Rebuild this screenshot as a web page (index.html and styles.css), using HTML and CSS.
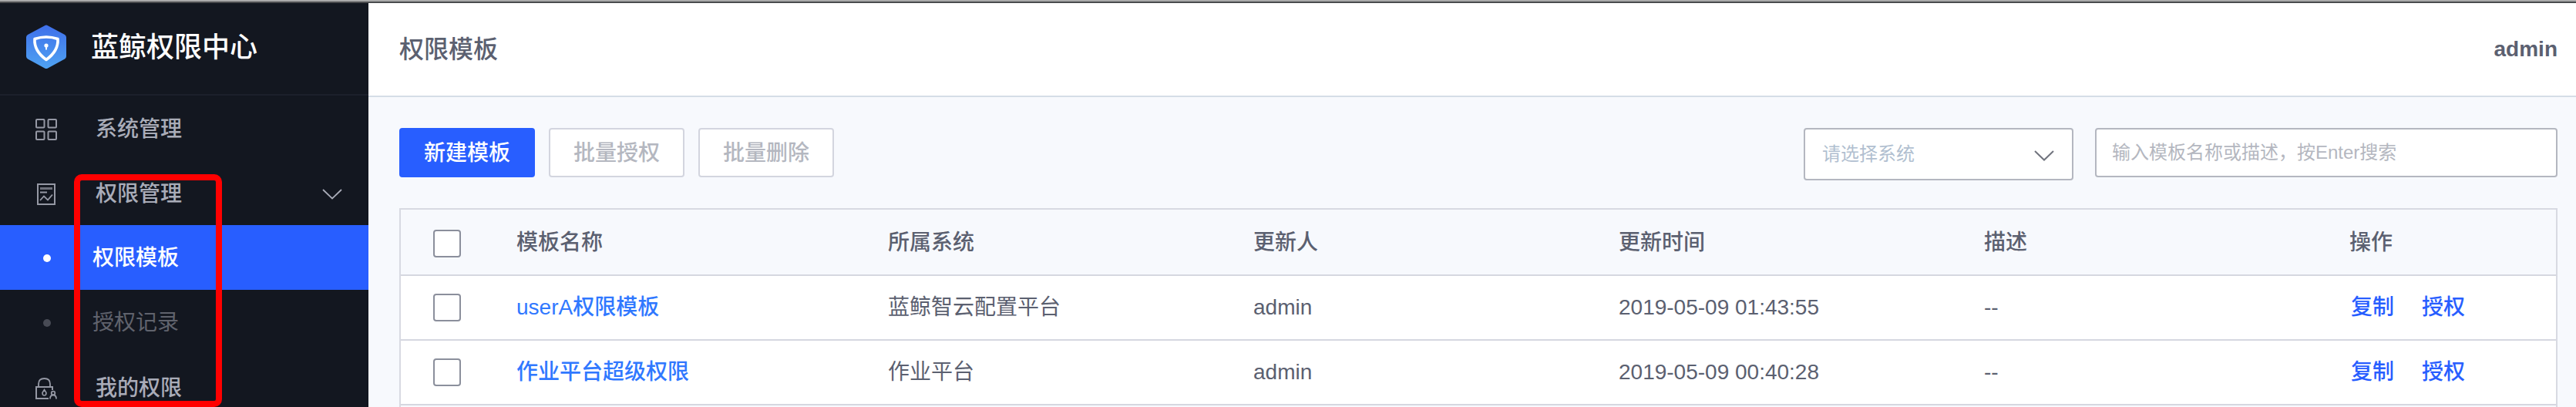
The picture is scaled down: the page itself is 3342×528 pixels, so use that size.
FILE: index.html
```html
<!DOCTYPE html>
<html lang="zh-CN">
<head>
<meta charset="utf-8">
<title>蓝鲸权限中心</title>
<link rel="stylesheet" href="styles.css">
</head>
<body>
<div class="app">
  <aside class="sidebar">
    <div class="brand">
      <svg class="brand-logo" viewBox="0 0 52 58" aria-hidden="true">
        <defs>
          <linearGradient id="logo-fill" x1="0" y1="0" x2="0" y2="1">
            <stop offset="0" stop-color="#3f6fea"/>
            <stop offset="1" stop-color="#4fa3f2"/>
          </linearGradient>
        </defs>
        <path d="M24 1.200q2-1.200 4 0L50 13q2 1.200 2 3.400V41q0 2.200-2 3.400L28 56.500q-2 1.200-4 0L2 44.400Q0 43.200 0 41V16.400Q0 14.200 2 13z" fill="url(#logo-fill)"/>
        <path d="M11 18.500Q26 13.500 41 18.500Q42 34 26 45.500Q10 34 11 18.500z" fill="none" stroke="#fff" stroke-width="3.600" stroke-linejoin="round"/>
        <circle cx="26" cy="27" r="2.600" fill="#fff"/>
        <path d="M26 27v5.500" stroke="#fff" stroke-width="2"/>
      </svg>
      <span class="brand-name">蓝鲸权限中心</span>
    </div>
    <nav class="nav">
      <a class="nav-item" href="#system">
        <svg class="nav-icon" viewBox="0 0 28 28" aria-hidden="true"><g fill="none" stroke="currentColor" stroke-width="2"><rect x="1" y="1" width="10.500" height="10.500" rx="1"/><rect x="16.500" y="1" width="10.500" height="10.500" rx="1"/><rect x="1" y="16.500" width="10.500" height="10.500" rx="1"/><rect x="16.500" y="16.500" width="10.500" height="10.500" rx="1"/></g></svg>
        <span>系统管理</span>
      </a>
      <a class="nav-item" href="#permission">
        <svg class="nav-icon" viewBox="0 0 28 28" aria-hidden="true"><g fill="none" stroke="currentColor" stroke-width="2"><rect x="3" y="1" width="22" height="26"/><path d="M6 6.500h16" stroke-width="3" opacity=".7"/><path d="M6 11.500h9"/><path d="M6 22l5-5.500 5 5 6-7" stroke-width="1.800"/></g></svg>
        <span>权限管理</span>
        <svg class="nav-arrow" viewBox="0 0 26 14" aria-hidden="true"><path d="M1 1l12 11.500L25 1" fill="none" stroke="currentColor" stroke-width="1.800"/></svg>
      </a>
      <a class="nav-item nav-sub is-active" href="#template"><i class="dot"></i><span>权限模板</span></a>
      <a class="nav-item nav-sub" href="#record"><i class="dot"></i><span>授权记录</span></a>
      <a class="nav-item" href="#mine">
        <svg class="nav-icon" viewBox="0 0 28 28" aria-hidden="true"><g fill="none" stroke="currentColor" stroke-width="2"><path d="M17 27H1V12h21v4"/><path d="M4 12V8q0-7 7.500-7T19 8v4" stroke-width="1.800"/><path d="M11.500 15.500l2.500 4q0 3.500-2.500 3.500T9 19.500z" stroke-width="1.600"/><circle cx="23" cy="20" r="2.300" stroke-width="1.800"/><path d="M19 27.500q0-5 4-5t4 5" stroke-width="1.800"/></g></svg>
        <span>我的权限</span>
      </a>
    </nav>
    <div class="highlight"></div>
  </aside>
  <div class="page">
    <header class="topbar">
      <h1 class="page-title">权限模板</h1>
      <span class="user">admin</span>
    </header>
    <main class="content">
      <div class="toolbar">
        <button class="btn btn-primary" type="button">新建模板</button>
        <button class="btn" type="button" disabled>批量授权</button>
        <button class="btn" type="button" disabled>批量删除</button>
        <div class="filters">
          <div class="select-wrap">
            <select class="select" aria-label="请选择系统"><option>请选择系统</option></select>
            <svg class="select-arrow" viewBox="0 0 26 14" aria-hidden="true"><path d="M1 1l12 11.500L25 1" fill="none" stroke="currentColor" stroke-width="2"/></svg>
          </div>
          <input class="search" type="text" aria-label="搜索模板" placeholder="输入模板名称或描述，按Enter搜索">
        </div>
      </div>
      <div class="table-box">
        <table class="table">
          <colgroup><col class="col-check"><col class="col-name"><col><col><col><col><col class="col-ops"></colgroup>
          <thead>
            <tr>
              <th class="check-cell"><input class="check" type="checkbox" aria-label="全选"></th>
              <th>模板名称</th><th>所属系统</th><th>更新人</th><th>更新时间</th><th>描述</th><th>操作</th>
            </tr>
          </thead>
          <tbody>
            <tr>
              <td class="check-cell"><input class="check" type="checkbox" aria-label="选择 userA权限模板"></td>
              <td><a class="name-link" href="#t1">userA权限模板</a></td>
              <td>蓝鲸智云配置平台</td><td>admin</td><td>2019-05-09 01:43:55</td><td>--</td>
              <td><div class="ops"><a href="#copy1">复制</a><a href="#grant1">授权</a></div></td>
            </tr>
            <tr>
              <td class="check-cell"><input class="check" type="checkbox" aria-label="选择 作业平台超级权限"></td>
              <td><a class="name-link" href="#t2">作业平台超级权限</a></td>
              <td>作业平台</td><td>admin</td><td>2019-05-09 00:40:28</td><td>--</td>
              <td><div class="ops"><a href="#copy2">复制</a><a href="#grant2">授权</a></div></td>
            </tr>
          </tbody>
        </table>
      </div>
    </main>
  </div>
</div>
</body>
</html>
```
FILE: styles.css
```css
* { box-sizing: border-box; }

body {
  margin: 0;
  overflow: hidden;
  background: #f7f9fd;
  color: #5b6070;
  font: 28px/40px "Liberation Sans", "Noto Sans CJK SC", sans-serif;
}

a { text-decoration: none; }

.app {
  display: flex;
  height: 100vh;
  border-top: 2px solid #aaaaaa;
}

.sidebar {
  position: relative;
  flex: none;
  width: 478px;
  overflow: hidden;
  border-top: 2px solid #4a4b4e;
  background: #131720;
}

.brand {
  display: flex;
  align-items: center;
  gap: 32px;
  height: 120px;
  padding: 0 34px 4px;
  border-bottom: 2px solid #1c202b;
}

.brand-logo { width: 52px; height: 58px; }

.brand-name {
  padding-top: 2px;
  color: #ffffff;
  font-size: 36px;
  font-weight: 500;
}

.nav-item {
  display: flex;
  align-items: center;
  gap: 50px;
  height: 84px;
  padding: 4px 34px 0 46px;
  color: #a9acb8;
  font-weight: 500;
}

.nav-icon { width: 28px; height: 28px; color: #9598a4; }

.nav-arrow { width: 26px; height: 14px; margin-left: auto; }

.nav-sub {
  gap: 54px;
  padding-top: 2px;
  padding-left: 56px;
  color: #60636d;
  font-weight: 400;
}

.dot {
  width: 10px;
  height: 10px;
  border-radius: 50%;
  background: #484b55;
}

.is-active {
  background: #285eff;
  color: #ffffff;
  font-weight: 500;
}

.is-active .dot { background: #ffffff; }

.highlight {
  position: absolute;
  top: 222px;
  bottom: 0;
  left: 96px;
  width: 192px;
  border: 8px solid #ff0000;
  border-radius: 10px;
  pointer-events: none;
}

.page { flex: 1; min-width: 0; border-top: 2px solid #4a4b4e; }

.topbar {
  display: flex;
  align-items: center;
  justify-content: space-between;
  height: 122px;
  padding: 0 24px 0 40px;
  border-bottom: 2px solid #d5dde7;
  background: #ffffff;
}

.page-title { margin: 0; font-size: 32px; font-weight: 500; }

.user { font-weight: 700; }

.content { padding: 40px 24px 0 40px; }

.toolbar {
  display: flex;
  align-items: flex-start;
  gap: 18px;
  margin-bottom: 36px;
}

.btn {
  height: 64px;
  padding: 2px 30px 0;
  border: 2px solid #d3d5df;
  border-radius: 4px;
  background: #ffffff;
  color: #b4b7c0;
  font: inherit;
  font-weight: 500;
}

.btn-primary {
  border-color: #285eff;
  background: #285eff;
  color: #ffffff;
}

.filters {
  display: flex;
  align-items: flex-start;
  gap: 28px;
  margin-left: auto;
}

.select-wrap { position: relative; width: 350px; }

.select,
.search {
  display: block;
  border: 2px solid #b4b7c0;
  border-radius: 4px;
  background: #ffffff;
  font: inherit;
  font-size: 24px;
}

.select {
  width: 100%;
  height: 68px;
  padding: 0 60px 0 22px;
  color: #b1bfd0;
  appearance: none;
}

.select-arrow {
  position: absolute;
  top: 29px;
  right: 25px;
  width: 26px;
  height: 14px;
  color: #71747e;
  pointer-events: none;
}

.search { width: 600px; height: 64px; padding: 0 20px; }

.search::placeholder { color: #b4b7c0; opacity: 1; }

.table-box {
  padding-bottom: 84px;
  border: 2px solid #d8dae2;
}

.table {
  width: 100%;
  table-layout: fixed;
  border-collapse: separate;
  border-spacing: 0;
}

.col-check { width: 120px; }
.col-name { width: 482px; }
.col-ops { width: 298px; }

.table th,
.table td {
  height: 84px;
  padding: 0 0 0 30px;
  border-bottom: 2px solid #d5d7e0;
  text-align: left;
}

.table th { height: 86px; padding-top: 2px; font-weight: 500; }

.table td { background: #ffffff; }

.table .check-cell { padding-left: 42px; }

.table th.check-cell { padding-top: 4px; }

.check {
  display: block;
  width: 36px;
  height: 36px;
  margin: 0;
  border: 2px solid #8b8f9c;
  border-radius: 4px;
  background: #ffffff;
  appearance: none;
}

.name-link { color: #3078ff; font-weight: 500; }

.ops { display: flex; gap: 36px; padding-left: 2px; }

.ops a { color: #285eff; font-weight: 500; }
```
